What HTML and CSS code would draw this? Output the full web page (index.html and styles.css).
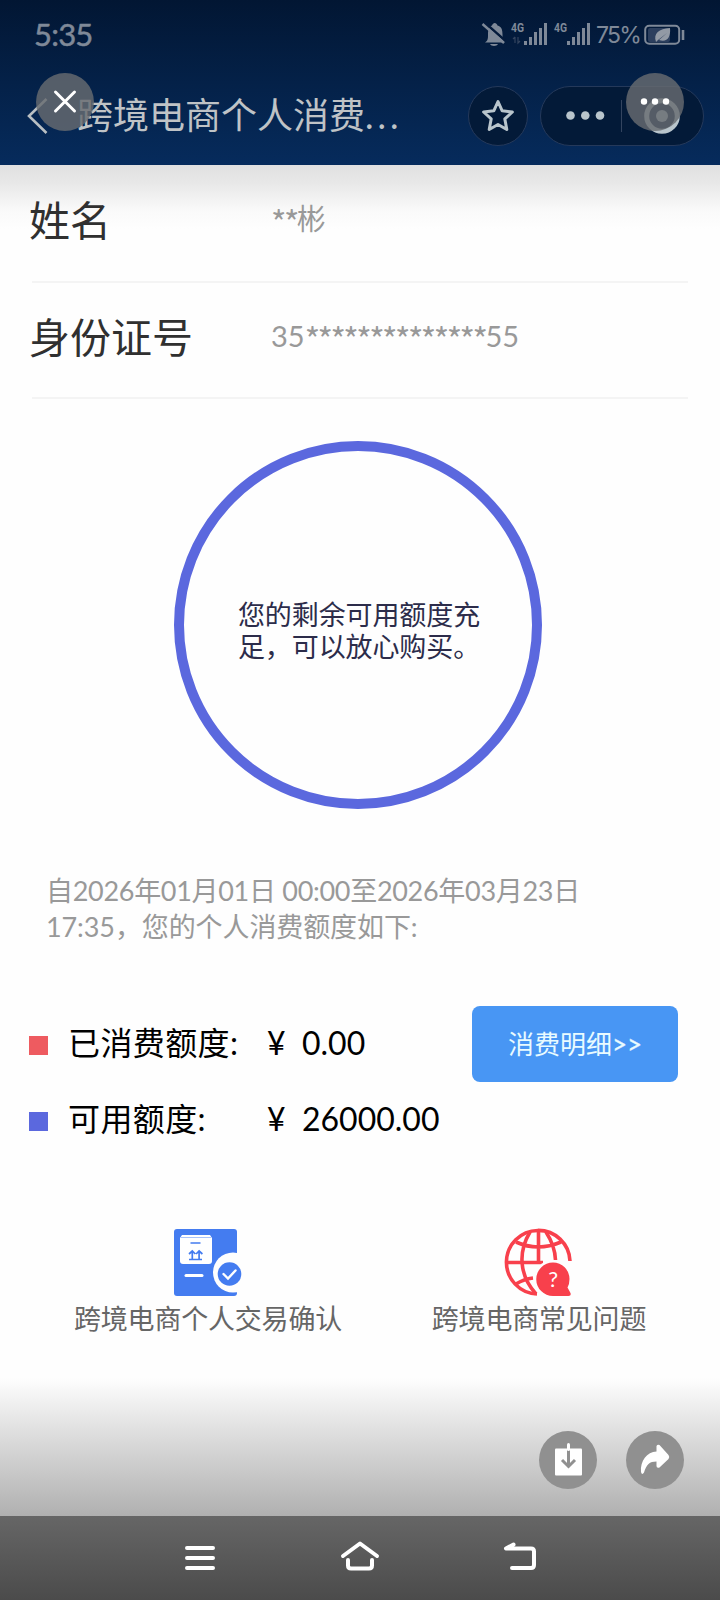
FILE: index.html
```html
<!DOCTYPE html>
<html lang="zh-CN">
<head>
<meta charset="utf-8">
<title>跨境电商个人消费额度</title>
<link rel="stylesheet" href="styles.css">
</head>
<body>
<div class="screen">
  <header class="header">
    <div class="status">
      <span class="time">5:35</span>
      <svg class="status-icons" width="108" height="28" viewBox="0 0 108 28" fill="#7f8998">
        <path d="M3 21.500c3-2 3-4 3-8 0-5 1-8 4-9 1-3.500 4.500-3.500 5.500 0 4 1 5 4 5 9 0 4 0 6 2 8z"/>
        <path d="M8 23h8c-1 2.600-7 2.600-8 0z"/>
        <path d="M2 1l21 18.500" stroke="#041a3b" stroke-width="2.400" fill="none"/>
        <path d="M.5 3L22 22" stroke="#7f8998" stroke-width="2.400" fill="none"/>
        <text class="net" x="29" y="11" textLength="13" lengthAdjust="spacingAndGlyphs">4G</text>
        <path d="M33 16v6m-2-4l2-2m3 0v6l2-2" stroke="#33445f" stroke-width="1.2" fill="none"/>
        <path d="M42 20h3v4h-3zM47 16h3v8h-3zM52 11h3v13h-3zM57 7h3v17h-3zM62 2h3v22h-3z"/>
        <text class="net" x="72" y="11" textLength="13" lengthAdjust="spacingAndGlyphs">4G</text>
        <path d="M85 20h3v4h-3zM90 16h3v8h-3zM95 11h3v13h-3zM100 7h3v17h-3zM105 2h3v22h-3z"/>
      </svg>
      <span class="percent">75%</span>
      <svg class="battery" width="42" height="22" viewBox="0 0 42 22">
        <rect x="4" y="4" width="22" height="14" rx="2" fill="#2c3f5e"/>
        <rect x="1.2" y="1.7" width="34" height="18" rx="4" fill="none" stroke="#7f8998" stroke-width="2"/>
        <path d="M39 6v10" stroke="#7f8998" stroke-width="2.600"/>
        <path d="M12 18c-3-9 3-13 14-14 1 9-3 15-11 12l8-7-9 7z" fill="#929aa5"/>
      </svg>
    </div>
    <div class="titlebar">
      <svg class="back" width="24" height="40" viewBox="0 0 24 40"><path d="M20.500 3L3 20l17.500 17" fill="none" stroke="#b9bfc3" stroke-width="2.600"/></svg>
      <h1 class="title">跨境电商个人消费<span class="dots">...</span></h1>
      <div class="star">
        <svg width="36" height="38" viewBox="0 0 36 38"><path d="M18 4.500l4.200 9.300 10.200 1.200-7.600 6.900 2 10.600L18 27.500l-8.800 5 2-10.600L3.600 15l10.200-1.200z" fill="none" stroke="#b9c5cc" stroke-width="3" stroke-linejoin="round"/></svg>
      </div>
      <div class="capsule">
        <svg width="162" height="60" viewBox="0 0 162 60">
          <g fill="#b9c5cc"><circle cx="29.500" cy="29.500" r="4.300"/><circle cx="44.300" cy="29.500" r="4.300"/><circle cx="59" cy="29.500" r="4.300"/></g>
          <path d="M80.500 14v32" stroke="#33445f" stroke-width="1"/>
          <circle cx="121" cy="30" r="15.300" fill="none" stroke="#b9c5cc" stroke-width="5"/><circle cx="121" cy="30" r="6" fill="#b9c5cc"/>
        </svg>
      </div>
    </div>
    <svg class="float float-close" width="58" height="58" viewBox="0 0 58 58"><circle cx="29" cy="29" r="29" fill="#686b70" fill-opacity=".82"/><path d="M19.500 19l19 19m0-19l-19 19" stroke="#fff" stroke-width="3" stroke-linecap="round"/></svg>
    <svg class="float float-more" width="58" height="58" viewBox="0 0 58 58"><circle cx="29" cy="29" r="29" fill="#686b70" fill-opacity=".82"/><g fill="#fff"><circle cx="18" cy="28.500" r="3.200"/><circle cx="29" cy="28.500" r="3.200"/><circle cx="40" cy="28.500" r="3.200"/></g></svg>
  </header>

  <main class="content">
    <dl class="info">
      <div class="row"><dt>姓名</dt><dd><span class="stars">**</span>彬</dd></div>
      <div class="row"><dt>身份证号</dt><dd>35<span class="stars">**************</span>55</dd></div>
    </dl>
    <div class="ring"><p>您的剩余可用额度充<br>足，可以放心购买。</p></div>
    <p class="period">自2026年01月01日 00:00至2026年03月23日<br><span class="second">17:35，您的个人消费额度如下:</span></p>
    <section class="quota">
      <div class="amounts">
        <div class="amount"><i class="mark used"></i><span class="label">已消费额度:</span><span class="yen">¥</span><span>0.00</span></div>
        <div class="amount"><i class="mark free"></i><span class="label">可用额度:</span><span class="yen">¥</span><span>26000.00</span></div>
      </div>
      <button class="detail">消费明细<span class="more">&gt;&gt;</span></button>
    </section>
    <nav class="links">
      <a class="link">
        <svg width="68" height="68" viewBox="0 0 68 68">
          <rect width="63" height="67" rx="3" fill="#447cf0"/>
          <path d="M8 6h28l2 3v23q0 3-3 3H9q-3 0-3-3V9z" fill="#fff"/>
          <path d="M7 8.500h30" stroke="#a9c3f9" stroke-width="1"/>
          <path d="M16.500 14h10M15 30.500h13M18.300 30v-7m6.800 7v-7M15 25l3.300-3 3 3m.8 0l3-3 3.300 3" fill="none" stroke="#447cf0" stroke-width="1.700"/>
          <path d="M12 46.500h16" stroke="#fff" stroke-width="3" stroke-linecap="round"/>
          <circle cx="59" cy="43.500" r="20" fill="#fefefe"/><circle cx="55.500" cy="45" r="11.800" fill="#447cf0"/>
          <path d="M49.500 45l4.500 4.500 7.500-8" fill="none" stroke="#fff" stroke-width="2.400" stroke-linecap="round"/>
        </svg>
        <span>跨境电商个人交易确认</span>
      </a>
      <a class="link">
        <svg width="68" height="68" viewBox="0 0 68 68">
          <g fill="none" stroke="#f8404c" stroke-width="3.600">
            <path d="M65 32A31.800 31.800 0 1 0 32 65"/>
            <path d="M33.500 2v32M2 33.500h36M11 13q22 10 45 0M11 55q8-5 17-6M25 3C13 23 14 46 31 65M41 3q9 14 9.500 28"/>
          </g>
          <circle cx="48" cy="50" r="19" fill="#fefefe"/>
          <path d="M48 33.500a16.500 16.500 0 0 1 16.500 16.500q0 5-2 8.500l3 5.500q1 3-2 3H48a16.500 16.500 0 0 1 0-33.500z" fill="#f8404c"/>
          <text class="question" x="48" y="58">?</text>
        </svg>
        <span>跨境电商常见问题</span>
      </a>
    </nav>
  </main>

  <div class="actions">
    <svg width="58" height="58" viewBox="0 0 58 58"><circle cx="29" cy="29" r="29" fill="#909090"/><rect x="16" y="17.500" width="27" height="27" rx="1" fill="#fff"/><path d="M29.500 19V36M23 29l6.500 6.500L36 29" fill="none" stroke="#909090" stroke-width="3"/><path d="M29.500 13.500v5" stroke="#fff" stroke-width="3" stroke-linecap="round"/></svg>
    <svg width="58" height="58" viewBox="0 0 58 58"><circle cx="29" cy="29" r="29" fill="#909090"/><path d="M30.500 15q1-2 3-1l9 10q1.500 2 0 4l-9 8.500q-3 1-3-1.500v-4.500c-7 0-10 3-12.500 11q-2 3-3-.5c-1-11 6-20 15.500-20.500z" fill="#fff"/></svg>
  </div>
  <footer class="navbar">
    <svg width="32" height="30" viewBox="0 0 32 30"><path d="M3 5h26M3 15h26M3 25h26" stroke="#fff" stroke-width="4" stroke-linecap="round"/></svg>
    <svg width="40" height="30" viewBox="0 0 40 30"><path d="M3 13L20 .5 37 13M8 17v5.500q0 3 3 3h18q3 0 3-3V17" fill="none" stroke="#fff" stroke-width="4" stroke-linecap="round" stroke-linejoin="round"/></svg>
    <svg width="34" height="30" viewBox="0 0 34 30"><path d="M9.500 1.500L2 5.500h25q3 0 3 3V22q0 3-3 3H8" fill="none" stroke="#fff" stroke-width="4" stroke-linecap="round" stroke-linejoin="round"/></svg>
  </footer>
</div>
</body>
</html>
```

FILE: styles.css
```css
* { box-sizing: border-box; }
body, h1, p, dl, dd { margin: 0; }
body { font-family: Lato, "Noto Sans CJK SC", sans-serif; background: #fff; }
svg { display: block; flex: none; overflow: visible; }
.screen { width: 720px; height: 1600px; display: flex; flex-direction: column; background: #fefefe; overflow: hidden; }

.header { position: relative; flex: none; height: 165px; background: linear-gradient(#021633, #042148 50%, #062b5c); }
.status { display: flex; align-items: center; height: 69px; padding-left: 34px; }
.time { width: 448px; font-size: 31px; line-height: 40px; padding-bottom: 2px; letter-spacing: -.8px; color: #7f8998; -webkit-text-stroke: .5px; }
.net { font: 700 12px Roboto, sans-serif; }
.percent { width: 45px; margin: 0 3px 0 6px; font: 23px/40px Inter, sans-serif; letter-spacing: -1.7px; color: #7f8998; white-space: nowrap; }
.titlebar { display: flex; align-items: center; height: 94px; padding-left: 26px; }
.back { margin-right: 27px; }
.title { width: 391px; padding-bottom: 2px; font-size: 36px; line-height: 50px; font-weight: 400; color: #bfc3c6; white-space: nowrap; }
.dots { letter-spacing: 4px; }
.star, .capsule { display: flex; align-items: center; justify-content: center; height: 60px; border: 1px solid #25395a; background: #031a38; border-radius: 30px; }
.star { width: 60px; margin-right: 12px; }
.capsule { width: 164px; }
.float { position: absolute; top: 73px; }
.float-close { left: 36px; }
.float-more { left: 626px; }

.content { flex: none; height: 1213px; background: linear-gradient(#e0e0e0, #e8e8e8 18px, #fafafa 46px, #fefefe 64px); }
.info { padding: 0 32px; }
.row { display: flex; align-items: center; height: 118px; padding-bottom: 9px; border-bottom: 2px solid #f4f4f4; }
.row + .row { height: 116px; padding-bottom: 8px; }
dt { width: 239px; margin-left: -3px; padding-bottom: 2px; font-size: 41px; color: #303030; white-space: nowrap; }
dd { margin-left: 3px; font-size: 29px; line-height: 40px; color: #999; white-space: nowrap; }
.stars { font: 33px/1 "Noto Sans CJK SC", sans-serif; letter-spacing: -2.5px; vertical-align: -5px; }
.ring { display: flex; align-items: center; justify-content: center; width: 368px; height: 368px; margin: 42px 0 0 174px; padding: 12px 0 0 2px; border: 10px solid #5b68de; border-radius: 50%; }
.ring p { font-size: 27px; line-height: 32.500px; color: #2c2c4a; letter-spacing: -.1px; }
.period { margin: 64px 0 0 46px; font-size: 27px; line-height: 36px; color: #999; letter-spacing: -.3px; white-space: nowrap; }
.second { letter-spacing: -.1px; }
.quota { display: flex; justify-content: space-between; margin-top: 61px; padding: 0 42px 0 29px; }
.amounts { display: flex; flex-direction: column; }
.amount { display: flex; align-items: center; height: 76px; font-size: 32px; line-height: 40px; color: #000; }
.amount span { padding-bottom: 2px; }
.mark { width: 19px; height: 19px; margin: 2px 20px 0 0; }
.used { background: #ee5b60; }
.free { background: #5b68de; }
.label { width: 199px; letter-spacing: .4px; }
.amount .yen { width: 35px; }
.detail { width: 206px; height: 76px; padding: 0; border: 0; border-radius: 8px; background: #4896f4; color: #e9fbff; font: 26px/38px Lato, "Noto Sans CJK SC", sans-serif; }
.more { -webkit-text-stroke: .3px; }
.links { display: flex; padding: 71px 0 0 74px; }
.link { display: flex; flex-direction: column; align-items: center; width: 268px; margin-right: 89px; font-size: 27px; line-height: 44px; letter-spacing: -.2px; color: #666; white-space: nowrap; }
.link + .link { width: 216px; margin: 0; }
.question { font: 22px Lato, sans-serif; fill: #fff; text-anchor: middle; }

.actions { flex: none; display: flex; gap: 29px; height: 138px; padding: 53px 0 0 539px; background: linear-gradient(#fefefe, #dedede 40%, #b0b0b0); }
.navbar { flex: none; display: flex; gap: 124px; align-items: center; height: 84px; padding: 0 0 0 184px; background: linear-gradient(#666, #4b4b4b); }
```
